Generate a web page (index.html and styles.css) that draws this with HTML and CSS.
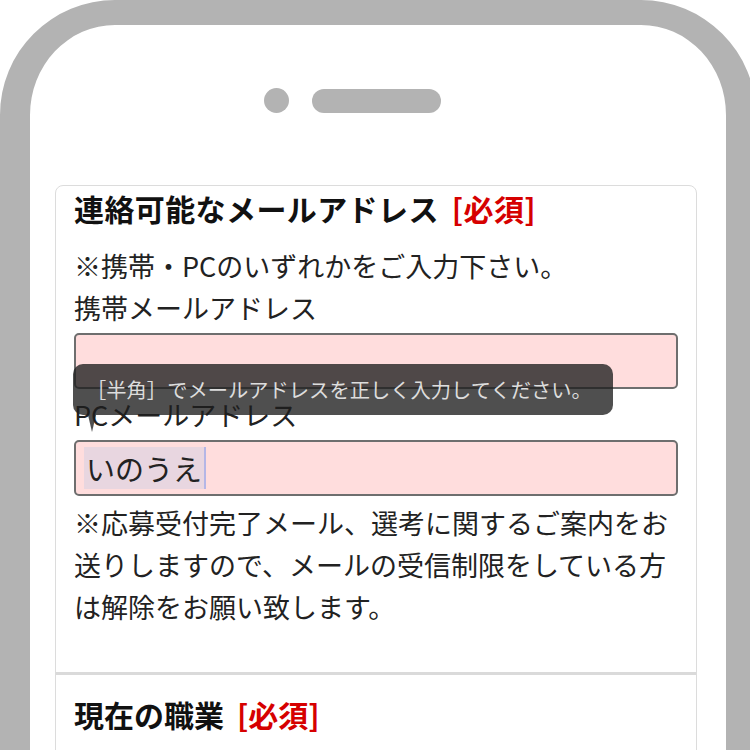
FILE: index.html
```html
<!doctype html>
<html lang="ja">
<head>
    <meta charset="UTF-8">
    <meta name="viewport" content="width=device-width, initial-scale=1.0">
    <title>応募フォーム</title>
    <link rel="stylesheet" href="styles.css">
</head>
<body>
<div class="phone">
    <div class="speaker">
        <span class="camera"></span>
        <span class="slot"></span>
    </div>

    <div class="form">
        <section class="field">
            <h2>連絡可能なメールアドレス<span class="req">[必須]</span></h2>
            <p>※携帯・PCのいずれかをご入力下さい。</p>
            <div class="label">携帯メールアドレス</div>
            <div class="input_wrap">
                <div class="input error"></div>
                <!-- バリデーションのツールチップ -->
                <div class="tip">［半角］でメールアドレスを正しく入力してください。</div>
            </div>
            <div class="label label_pc">PCメールアドレス</div>
            <div class="input_wrap">
                <div class="input error"><span class="sel">いのうえ</span><span class="caret"></span></div>
            </div>
            <p class="note">※応募受付完了メール、選考に関するご案内をお送りしますので、メールの受信制限をしている方は解除をお願い致します。</p>
        </section>

        <section class="field field_next">
            <h2>現在の職業<span class="req">[必須]</span></h2>
        </section>
    </div>
</div>
</body>
</html>
```

FILE: styles.css
```css
* {
    box-sizing: border-box;
}

html, body {
    margin: 0;
    height: 100%;
    overflow: hidden;
    background-color: #fff;
}

body {
    font-family: "Noto Sans CJK JP", "Noto Sans", sans-serif;
    color: #222;
}

/* 端末の枠 */
.phone {
    width: 756px;
    height: 1000px;
    border: solid #b3b3b3;
    border-width: 25px 30px;
    border-radius: 115px;
    padding: 63px 0 0 25px;
}

.speaker {
    display: flex;
    justify-content: center;
    align-items: center;
    gap: 23px;
    width: 642px;
    height: 25px;
    padding-right: 48px;
}

.camera {
    width: 25px;
    height: 25px;
    border-radius: 50%;
    background-color: #b3b3b3;
}

.slot {
    width: 129px;
    height: 24px;
    border-radius: 12px;
    background-color: #b3b3b3;
}

/* フォーム */
.form {
    width: 642px;
    margin-top: 72px;
    border: 1px solid #dcdcdc;
    border-radius: 8px;
}

.field {
    padding: 1px 18px 44px;
}

.field_next {
    border-top: 3px solid #dadada;
    padding-top: 18px;
    padding-bottom: 100px;
}

h2 {
    margin: 0;
    font-size: 30px;
    line-height: 42px;
    font-weight: bold;
    color: #111;
    letter-spacing: 0.4px;
}

.field_next h2 {
    letter-spacing: 0;
}

.req {
    color: #d60000;
    margin-left: 13px;
}

p, .label {
    margin: 0;
    font-size: 27px;
    line-height: 42px;
}

h2 + p {
    margin-top: 16px;
}

.label_pc {
    margin-top: 5px;
}

.input_wrap {
    position: relative;
    margin-top: 4px;
}

.input {
    height: 56px;
    border: 2px solid #6e6e6e;
    border-radius: 5px;
    padding: 0 8px;
    display: flex;
    align-items: center;
    font-size: 29px;
    color: #222;
}

.error {
    background-color: #ffdddd;
}

.sel {
    background-color: #e8d6e0;
    line-height: 42px;
    padding: 0 2px;
}

.caret {
    width: 2px;
    height: 42px;
    background-color: #b4b6e6;
}

.note {
    margin-top: 6px;
}

.tip {
    position: absolute;
    z-index: 2;
    top: 31px;
    left: -1px;
    width: 540px;
    height: 51px;
    padding-left: 13px;
    border-radius: 10px;
    background-color: rgba(30, 30, 30, 0.78);
    color: #ddd;
    font-size: 20.3px;
    line-height: 51px;
    white-space: nowrap;
}

.tip::after {
    content: "";
    position: absolute;
    top: 100%;
    left: 15px;
    border-top: 17px solid rgba(30, 30, 30, 0.78);
    border-left: 4px solid transparent;
    border-right: 4px solid transparent;
}
```
